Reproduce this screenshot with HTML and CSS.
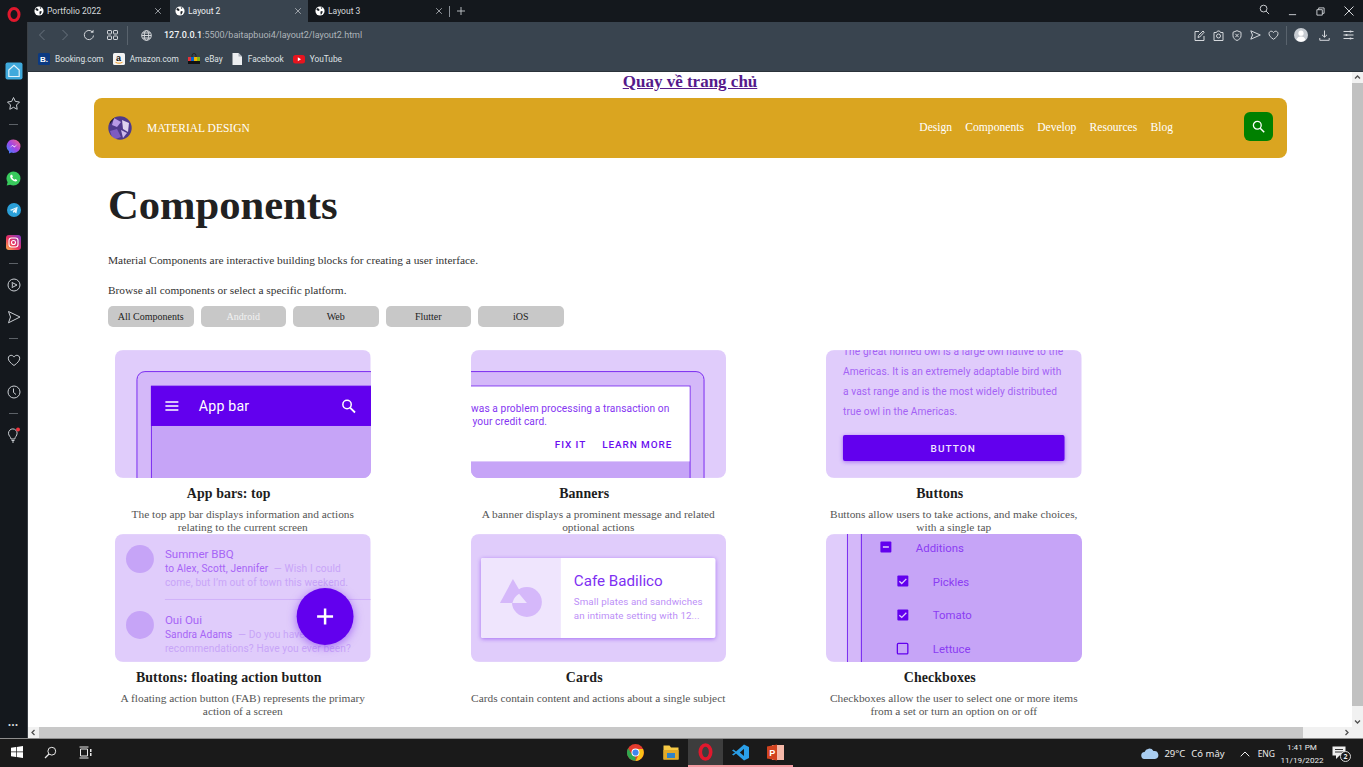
FILE: index.html
```html
<!DOCTYPE html>
<html lang="vi">
<head>
<meta charset="utf-8">
<title>Layout 2</title>
<link rel="stylesheet" href="styles.css">
</head>
<body>
<svg class="defs" width="0" height="0" aria-hidden="true">
  <symbol id="globe" viewBox="0 0 12 12"><circle cx="6" cy="6" r="5.5" fill="#fff"/><path d="M3 2.5l2 1 .5 1.500-1.500 1-1.500-1-1-1zM7 6l2.500.5L8 9.500l-1 1L6.500 8zM7 1.500l2 .5-1.500 1.500z" fill="#1b2026"/></symbol>
  <symbol id="x" viewBox="0 0 10 10"><path d="M1.500 1.500l7 7M8.500 1.500l-7 7" fill="none" stroke="currentColor" stroke-width="1"/></symbol>
  <symbol id="check" viewBox="0 0 12 12"><path d="M2.500 6.200l2.400 2.300 4.600-4.700" fill="none" stroke="#e0ccfc" stroke-width="1.300"/></symbol>
</svg>

<div class="tabbar">
  <div class="opera-slot">
    <svg width="14" height="15" viewBox="0 0 14 15"><ellipse cx="7" cy="7.500" rx="5" ry="6" fill="none" stroke="#e0182d" stroke-width="3"/></svg>
  </div>
  <div class="tab tab-one"><svg class="tab-globe"><use href="#globe"/></svg><span class="tab-title">Portfolio 2022</span><svg class="tab-x"><use href="#x"/></svg></div>
  <div class="tab tab-two active"><svg class="tab-globe"><use href="#globe"/></svg><span class="tab-title">Layout 2</span><svg class="tab-x"><use href="#x"/></svg></div>
  <div class="tab tab-three"><svg class="tab-globe"><use href="#globe"/></svg><span class="tab-title">Layout 3</span><svg class="tab-x"><use href="#x"/></svg></div>
  <div class="tab-sep"></div>
  <svg class="tab-plus" viewBox="0 0 9 9"><path d="M4.500 0v9M0 4.500h9" stroke="#c8ccd0" stroke-width="1"/></svg>
  <div class="win-controls">
    <svg class="wc-search" viewBox="0 0 12 12"><circle cx="5" cy="5" r="3.700" class="ln"/><path d="M7.700 7.700L11 11" class="ln"/></svg>
    <svg class="wc-min" viewBox="0 0 10 10"><path d="M1 8.500h8" class="ln"/></svg>
    <svg class="wc-restore" viewBox="0 0 10 10"><path d="M1 3h6v6H1zM3 3V1h6v6H7" class="ln"/></svg>
    <svg class="wc-close" viewBox="0 0 10 10"><path d="M.5.500l9 9M9.500.500l-9 9" class="ln"/></svg>
  </div>
</div>

<div class="frame">
  <aside class="sidebar">
    <div class="side-item"><svg width="18" height="18" viewBox="0 0 18 18"><rect x=".5" y=".5" width="17" height="17" rx="2" fill="#3fa9dc"/><path d="M3.800 8L9 3.200 14.200 8v6.500H3.800z" fill="none" stroke="#dff2fb" stroke-width="1.200"/></svg></div>
    <div class="side-item"><svg width="15" height="15" viewBox="0 0 15 15"><path d="M7.500 1.500l1.800 3.900 4.200.6-3 3 .7 4.300-3.700-2-3.700 2 .7-4.300-3-3 4.200-.6z" class="ln-side"/></svg></div>
    <div class="side-sep"><span></span></div>
    <div class="side-item"><svg width="15" height="15" viewBox="0 0 15 15"><defs><linearGradient id="msg" x1="0" y1="1" x2="1" y2="0"><stop offset="0" stop-color="#2d8cff"/><stop offset=".5" stop-color="#a344e6"/><stop offset="1" stop-color="#ff6a7a"/></linearGradient></defs><path d="M7.500 0.500a7 6.700 0 0 1 0 13.400c-.9 0-1.500-.1-2.200-.4L3 14.500v-2.200a6.700 6.700 0 0 1 4.500-11.800z" fill="url(#msg)"/><path d="M3.500 9l3-3 2 1.600L11.500 5l-3 3.400-2-1.600z" fill="#fff"/></svg></div>
    <div class="side-item"><svg width="15" height="15" viewBox="0 0 15 15"><path d="M7.500.5a7 7 0 0 1 0 14c-1.200 0-2.300-.3-3.300-.8L.7 14.500l.9-3.300A7 7 0 0 1 7.500.5z" fill="#38c95c"/><path d="M5 3.800l1.100-.1.800 1.900-.7.900c.5 1.100 1.300 1.800 2.300 2.300l.9-.8 1.800.9-.3 1.200c-.8.700-2 .5-3.100 0-1.700-.8-3-2.200-3.500-3.800C4 5.300 4.300 4.400 5 3.800z" fill="#fff"/></svg></div>
    <div class="side-item"><svg width="14" height="14" viewBox="0 0 14 14"><circle cx="7" cy="7" r="7" fill="#2a9fd8"/><path d="M2.800 7l7.900-3.200-1.300 6.700-2.200-1.600-1.100 1.100-.3-2L9 5.300 4.700 7.800z" fill="#e8f6fc"/></svg></div>
    <div class="side-item"><svg width="15" height="15" viewBox="0 0 15 15"><defs><linearGradient id="ig" x1="0" y1="1" x2="1" y2="0"><stop offset="0" stop-color="#fdb44b"/><stop offset=".45" stop-color="#e8305f"/><stop offset="1" stop-color="#7a3bc9"/></linearGradient></defs><rect width="15" height="15" rx="3" fill="url(#ig)"/><rect x="3" y="3" width="9" height="9" rx="2.500" fill="none" stroke="#fff" stroke-width="1.100"/><circle cx="7.500" cy="7.500" r="2" fill="none" stroke="#fff" stroke-width="1.100"/></svg></div>
    <div class="side-sep"><span></span></div>
    <div class="side-item"><svg width="14" height="14" viewBox="0 0 14 14"><circle cx="7" cy="7" r="6" class="ln-side"/><path d="M5 4.500L10 7 5 9.500C5.500 8 5.500 6 5 4.500z" class="ln-side"/></svg></div>
    <div class="side-item"><svg width="14" height="14" viewBox="0 0 14 14"><path d="M1.500 1.500L13 7 1.500 12.800 3.500 7z" class="ln-side"/></svg></div>
    <div class="side-sep"><span></span></div>
    <div class="side-item"><svg width="14" height="14" viewBox="0 0 14 14"><path d="M7 12.500C3.500 10 1.300 7.800 1.300 5.200 1.300 3.400 2.700 2.300 4.100 2.300c1.200 0 2.300.7 2.900 1.800.6-1.100 1.700-1.800 2.900-1.800 1.400 0 2.800 1.100 2.800 2.900 0 2.600-2.200 4.800-5.700 7.300z" class="ln-side"/></svg></div>
    <div class="side-item"><svg width="14" height="14" viewBox="0 0 14 14"><circle cx="7" cy="7" r="6" class="ln-side"/><path d="M6.500 3.500V7.500L9 9.500" class="ln-side"/></svg></div>
    <div class="side-sep"><span></span></div>
    <div class="side-item"><svg width="15" height="16" viewBox="0 0 15 16"><path d="M5 12c0-2-2.500-3-2.500-5.800a4.300 4.300 0 0 1 8.600 0C11.100 9 8.800 10 8.800 12z" class="ln-side"/><path d="M5.500 13.500h3M6 15h2" class="ln-side"/><circle cx="12" cy="2.500" r="2" fill="#f0323c"/></svg></div>
    <div class="side-dots">•••</div>
  </aside>

  <div class="main">
    <div class="toolbar">
      <button class="tb-btn dim"><svg width="8" height="12" viewBox="0 0 8 12"><path d="M6.500 1L1.500 6l5 5" class="ln"/></svg></button>
      <button class="tb-btn dim"><svg width="8" height="12" viewBox="0 0 8 12"><path d="M1.500 1l5 5-5 5" class="ln"/></svg></button>
      <button class="tb-btn"><svg width="12" height="12" viewBox="0 0 12 12"><path d="M10.500 6.500A4.600 4.600 0 1 1 9 2.600" class="ln"/><path d="M10.500.800v3h-3z" fill="currentColor"/></svg></button>
      <button class="tb-btn"><svg width="11" height="10" viewBox="0 0 11 10"><rect x=".5" y=".5" width="4" height="3.500" rx=".6" class="ln"/><rect x="6.500" y=".5" width="4" height="3.500" rx=".6" class="ln"/><rect x=".5" y="6" width="4" height="3.500" rx=".6" class="ln"/><rect x="6.500" y="6" width="4" height="3.500" rx=".6" class="ln"/></svg></button>
      <div class="tb-sep"></div>
      <svg class="url-globe" width="11" height="11" viewBox="0 0 11 11"><circle cx="5.500" cy="5.500" r="4.800" class="ln"/><ellipse cx="5.500" cy="5.500" rx="2.200" ry="4.800" class="ln"/><path d="M.7 5.500h9.600M1.500 3h8M1.500 8h8" class="ln"/></svg>
      <div class="url"><span class="url-host">127.0.0.1</span>:5500/baitapbuoi4/layout2/layout2.html</div>
      <div class="tb-right">
        <span class="tb-small"><svg width="11" height="11" viewBox="0 0 11 11"><path d="M5 1.500H1v9h9V6" class="ln"/><path d="M4 7.500l.5-2L9 1l1.200 1.200L5.700 7z" class="ln"/></svg></span>
        <span class="tb-small"><svg width="11" height="11" viewBox="0 0 11 11"><path d="M1 2.500h2.500l1-1.500h2l1 1.500H10v8H1z" class="ln"/><circle cx="5.500" cy="6" r="2" class="ln"/></svg></span>
        <span class="tb-small"><svg width="10" height="11" viewBox="0 0 10 11"><path d="M5 .7l4 1.600v3.500c0 2.300-1.800 3.800-4 4.700C2.800 9.600 1 8.100 1 5.800V2.300z" class="ln"/><path d="M3.300 3.800l3.400 3.400M6.700 3.800L3.300 7.200" class="ln"/></svg></span>
        <span class="tb-small"><svg width="11" height="10" viewBox="0 0 11 10"><path d="M.8.800L10.300 5 .8 9.200 2.500 5z" class="ln"/></svg></span>
        <span class="tb-small"><svg width="11" height="10" viewBox="0 0 11 10"><path d="M5.500 9.300C2.700 7.300 1 5.700 1 3.600 1 2.200 2 1.200 3.200 1.200c1 0 1.800.5 2.300 1.400C6 1.700 6.800 1.200 7.800 1.200 9 1.200 10 2.200 10 3.600c0 2.100-1.700 3.700-4.500 5.700z" class="ln"/></svg></span>
        <div class="tb-sep tb-sep-right"></div>
        <span class="tb-avatar"><svg width="14" height="14" viewBox="0 0 14 14"><circle cx="7" cy="7" r="7" fill="#c7ccd2"/><circle cx="7" cy="5.200" r="2.600" fill="#fff"/><path d="M2.500 12c.5-2.500 2.300-3.500 4.500-3.500s4 1 4.500 3.500A7 7 0 0 1 2.500 12z" fill="#fff"/></svg></span>
        <span class="tb-big"><svg width="11" height="11" viewBox="0 0 11 11"><path d="M5.500.5v6.500M3 4.800l2.500 2.400L8 4.800M.8 8v2.300h9.400V8" class="ln"/></svg></span>
        <span class="tb-big"><svg width="11" height="10" viewBox="0 0 11 10"><path d="M.5 1.500h10M.5 5h10M.5 8.500h10" class="ln"/><circle cx="7.500" cy="1.500" r="1.100" fill="#d5d8dc"/><circle cx="3.500" cy="5" r="1.100" fill="#d5d8dc"/><circle cx="7.500" cy="8.500" r="1.100" fill="#d5d8dc"/></svg></span>
      </div>
    </div>

    <div class="bookmarks">
      <div class="bm"><svg width="12" height="12" viewBox="0 0 12 12"><rect width="12" height="12" rx="1.500" fill="#0b3a82"/><text x="2" y="9.300" class="bm-b">B.</text></svg><span>Booking.com</span></div>
      <div class="bm"><svg width="12" height="12" viewBox="0 0 12 12"><rect width="12" height="12" rx="1.500" fill="#f3f3f3"/><text x="3" y="8" class="bm-a">a</text><path d="M2.500 9.300c2 1.200 5 1.200 7 0" fill="none" stroke="#f29a1f" stroke-width="1"/></svg><span>Amazon.com</span></div>
      <div class="bm"><svg width="12" height="12" viewBox="0 0 12 12"><path d="M4 4V2.500a2 2 0 0 1 4 0V4" fill="none" stroke="#222" stroke-width="1"/><rect y="4" width="3" height="4" fill="#e53238"/><rect x="3" y="4" width="3" height="4" fill="#0064d2"/><rect x="6" y="4" width="3" height="4" fill="#f5af02"/><rect x="9" y="4" width="3" height="4" fill="#86b817"/><rect y="8" width="12" height="3" fill="#111"/></svg><span>eBay</span></div>
      <div class="bm bm-doc"><svg width="10" height="12" viewBox="0 0 10 12"><path d="M.5 0h6l3.500 3.500V12H.5z" fill="#eceef0"/><path d="M6.500 0v3.500H10z" fill="#a9b0b8"/></svg><span>Facebook</span></div>
      <div class="bm"><svg width="12" height="12" viewBox="0 0 12 12"><rect y="2" width="12" height="8.500" rx="2.500" fill="#e8141e"/><path d="M4.800 4.300v4L8 6.300z" fill="#fff"/></svg><span>YouTube</span></div>
    </div>

    <div class="viewport">
      <div class="view-row">
        <div class="page">
          <h3 class="home-link"><a href="#home">Quay về trang chủ</a></h3>
          <nav class="navbar">
            <svg class="brand-logo" width="24" height="24" viewBox="0 0 24 24"><defs><clipPath id="logoc"><circle cx="12" cy="12" r="11.700"/></clipPath></defs><g clip-path="url(#logoc)"><g class="logo-art"><rect width="24" height="24" fill="#4f3a8c"/><path d="M6 2l7 4-4 5-5-2z" fill="#b79ae6"/><path d="M14 4l7 3-1 9-5-3z" fill="#ddd3ee"/><path d="M2 15l7-2 4 8-8 3z" fill="#7d5bc0"/><path d="M13 14l6 3-4 5z" fill="#cdb9ec"/><path d="M0 0h8L2 8z" fill="#1f1a30"/><path d="M17 0h7v7z" fill="#2a2238"/></g></g></svg>
            <span class="brand">MATERIAL DESIGN</span>
            <ul class="nav-links">
              <li><a href="#design">Design</a></li>
              <li><a href="#components">Components</a></li>
              <li><a href="#develop">Develop</a></li>
              <li><a href="#resources">Resources</a></li>
              <li><a href="#blog">Blog</a></li>
            </ul>
            <button class="nav-search"><svg width="13" height="13" viewBox="0 0 13 13"><circle cx="5.300" cy="5.300" r="3.900" fill="none" stroke="#fff" stroke-width="1.300"/><path d="M8.200 8.200l4 4" stroke="#fff" stroke-width="1.500"/></svg></button>
          </nav>

          <section class="intro">
            <h1>Components</h1>
            <p class="lead">Material Components are interactive building blocks for creating a user interface.</p>
            <p class="lead lead-two">Browse all components or select a specific platform.</p>
            <div class="pills">
              <button class="pill pill-main">All Components</button>
              <button class="pill pill-muted">Android</button>
              <button class="pill">Web</button>
              <button class="pill">Flutter</button>
              <button class="pill">iOS</button>
            </div>
          </section>

          <section class="grid">
            <article class="card">
              <svg class="thumb" viewBox="0 0 256 128">
                <rect width="256" height="128" class="c1"/>
                <rect x="22" y="21.500" width="260" height="140" rx="8" class="c2 edge"/>
                <rect x="36.500" y="36" width="240" height="120" class="c3 edge"/>
                <rect x="36" y="36" width="240" height="40" class="prim"/>
                <path d="M50.500 52h13M50.500 56h13M50.500 60h13" stroke="#fff" stroke-width="1.300"/>
                <text x="84" y="61" class="t-appbar">App bar</text>
                <circle cx="232.500" cy="54.500" r="4.200" fill="none" stroke="#fff" stroke-width="1.500"/>
                <path d="M235.500 57.500l5 5" stroke="#fff" stroke-width="1.800"/>
              </svg>
              <h2 class="card-title">App bars: top</h2>
              <p class="card-text">The top app bar displays information and actions relating to the current screen</p>
            </article>

            <article class="card">
              <svg class="thumb" viewBox="0 0 256 128">
                <rect width="256" height="128" class="c1"/>
                <rect x="-40" y="21.500" width="273.500" height="140" rx="8" class="c2 edge"/>
                <rect x="-40" y="36" width="259.500" height="100" class="c3 edge"/>
                <rect x="-40" y="36.500" width="259" height="75" fill="#fff"/>
                <text x="0" y="61.500" class="t-banner">was a problem processing a transaction on</text>
                <text x="1.500" y="75.500" class="t-banner">your credit card.</text>
                <text x="84" y="98.500" class="t-action">FIX IT</text>
                <text x="131.500" y="98.500" class="t-action">LEARN MORE</text>
              </svg>
              <h2 class="card-title">Banners</h2>
              <p class="card-text">A banner displays a prominent message and related optional actions</p>
            </article>

            <article class="card">
              <svg class="thumb" viewBox="0 0 256 128">
                <rect width="256" height="128" class="c1"/>
                <text x="17" y="5" class="t-owl">The great horned owl is a large owl native to the</text>
                <text x="17" y="25" class="t-owl">Americas. It is an extremely adaptable bird with</text>
                <text x="17" y="45" class="t-owl">a vast range and is the most widely distributed</text>
                <text x="17" y="65" class="t-owl">true owl in the Americas.</text>
                <rect x="17" y="85" width="222" height="26" rx="2" class="prim glow"/>
                <text x="127.500" y="102" class="t-btn">BUTTON</text>
              </svg>
              <h2 class="card-title">Buttons</h2>
              <p class="card-text">Buttons allow users to take actions, and make choices, with a single tap</p>
            </article>

            <article class="card">
              <svg class="thumb" viewBox="0 0 256 128">
                <rect width="256" height="128" class="c1"/>
                <circle cx="25" cy="25" r="14" class="c3"/>
                <circle cx="25" cy="91" r="14" class="c3"/>
                <text x="50" y="24" class="t-mail-h">Summer BBQ</text>
                <text x="50" y="38" class="t-mail"><tspan class="t-mail-strong">to Alex, Scott, Jennifer</tspan> <tspan dx="3">— Wish I could</tspan></text>
                <text x="50" y="52" class="t-mail">come, but I’m out of town this weekend.</text>
                <path d="M50 65.500h206" class="divider"/>
                <text x="50" y="90" class="t-mail-h">Oui Oui</text>
                <text x="50" y="104" class="t-mail"><tspan class="t-mail-strong">Sandra Adams</tspan> <tspan dx="3">— Do you have</tspan></text>
                <text x="50" y="118" class="t-mail">recommendations? Have you ever been?</text>
                <circle cx="210.500" cy="82.500" r="28.500" class="prim glow-fab"/>
                <path d="M202.500 82.500h16M210.500 74.500v16" stroke="#fff" stroke-width="2.500"/>
              </svg>
              <h2 class="card-title">Buttons: floating action button</h2>
              <p class="card-text">A floating action button (FAB) represents the primary action of a screen</p>
            </article>

            <article class="card">
              <svg class="thumb" viewBox="0 0 256 128">
                <rect width="256" height="128" class="c1"/>
                <rect x="10" y="24" width="235" height="80" rx="2" fill="#fff" class="glow"/>
                <path d="M10 26a2 2 0 0 1 2-2h78v80H12a2 2 0 0 1-2-2z" fill="#efe5fd"/>
                <circle cx="56" cy="68" r="15" fill="#d5b8fa"/>
                <path d="M42 45l-13 24h27z" fill="#d5b8fa"/>
                <path d="M41.500 69a15 15 0 0 1 6.700-9.200L56 69z" fill="#efe5fd"/>
                <text x="103" y="52" class="t-cafe">Cafe Badilico</text>
                <text x="103" y="71" class="t-cafe-s">Small plates and sandwiches</text>
                <text x="103" y="85" class="t-cafe-s">an intimate setting with 12...</text>
              </svg>
              <h2 class="card-title">Cards</h2>
              <p class="card-text">Cards contain content and actions about a single subject</p>
            </article>

            <article class="card">
              <svg class="thumb" viewBox="0 0 256 128">
                <rect width="256" height="128" class="c1"/>
                <rect x="21.500" y="-5" width="14" height="140" class="c2 edge"/>
                <rect x="35.500" y="-5" width="230" height="140" class="c3 edge"/>
                <rect x="54.500" y="7.500" width="11" height="11" rx="1" class="prim"/>
                <path d="M57 13h6" stroke="#e0ccfc" stroke-width="1.500"/>
                <text x="90" y="17.500" class="t-check">Additions</text>
                <rect x="71.500" y="41.500" width="11" height="11" rx="1" class="prim"/>
                <use href="#check" x="71" y="41" width="12" height="12"/>
                <text x="107" y="51.500" class="t-check">Pickles</text>
                <rect x="71.500" y="75.500" width="11" height="11" rx="1" class="prim"/>
                <use href="#check" x="71" y="75" width="12" height="12"/>
                <text x="107" y="85.500" class="t-check">Tomato</text>
                <rect x="71.500" y="109.500" width="10.500" height="10.500" rx="1" fill="none" stroke="#6200ee" stroke-width="1.300"/>
                <text x="107" y="119.500" class="t-check">Lettuce</text>
              </svg>
              <h2 class="card-title">Checkboxes</h2>
              <p class="card-text">Checkboxes allow the user to select one or more items from a set or turn an option on or off</p>
            </article>
          </section>
        </div>
        <div class="vscroll">
          <svg class="arrow" viewBox="0 0 11 11"><path d="M3 6.500l2.500-2.500L8 6.500" class="sb-a"/></svg>
          <div class="vthumb"></div>
          <svg class="arrow arrow-end" viewBox="0 0 11 11"><path d="M3 4.500L5.500 7 8 4.500" class="sb-a"/></svg>
        </div>
      </div>
      <div class="hscroll">
        <svg class="arrow" viewBox="0 0 11 11"><path d="M6.500 3L4 5.500 6.500 8" class="sb-a"/></svg>
        <div class="hthumb"></div>
        <svg class="arrow arrow-right" viewBox="0 0 11 11"><path d="M4.500 3L7 5.500 4.500 8" class="sb-a"/></svg>
        <div class="corner"></div>
      </div>
    </div>
  </div>
</div>

<footer class="taskbar">
  <span class="task task-win"><svg width="12" height="12" viewBox="0 0 12 12"><path d="M0 1.700l5-.7v4.600H0zM5.700.9L12 0v5.600H5.700zM0 6.300h5v4.700l-5-.7zM5.700 6.300H12V12l-6.300-.9z" fill="#fff"/></svg></span>
  <span class="task"><svg width="13" height="13" viewBox="0 0 13 13"><circle cx="7.800" cy="5.200" r="3.900" fill="none" stroke="#e8e8e8" stroke-width="1"/><path d="M5 8L1 12" stroke="#e8e8e8" stroke-width="1.200"/></svg></span>
  <span class="task"><svg width="13" height="13" viewBox="0 0 13 13"><path d="M1.500 3h7v7h-7zM.5 1h9M.5 12h9" fill="none" stroke="#e8e8e8" stroke-width="1"/><path d="M11 3h1.500v3H11zM11 7h1.500v3H11z" fill="#e8e8e8"/></svg></span>
  <span class="task task-first"><svg width="17" height="17" viewBox="0 0 17 17"><circle cx="8.500" cy="8.500" r="8.500" fill="#e33b2e"/><path d="M8.500 17a8.500 8.500 0 0 1-7.400-12.700L5 10.500l3.500 2.500z" fill="#2fa84f"/><path d="M8.500 5H16a8.500 8.500 0 0 1-7.500 12L12 10z" fill="#fbc116"/><circle cx="8.500" cy="8.500" r="4" fill="#fff"/><circle cx="8.500" cy="8.500" r="3.100" fill="#3f86ee"/></svg></span>
  <span class="task"><svg width="16" height="16" viewBox="0 0 16 16"><path d="M.5 1.500h6l1.500 2h7.500v12H.5z" fill="#f6c944"/><rect x=".5" y="6" width="15" height="9.500" fill="#e2a928"/><rect x="4" y="9" width="8" height="5" fill="#2f82c9"/></svg></span>
  <span class="task task-on task-active"><svg width="15" height="18" viewBox="0 0 15 18"><ellipse cx="7.500" cy="9" rx="5.200" ry="7" fill="none" stroke="#e0182d" stroke-width="3.600"/></svg></span>
  <span class="task task-on"><svg width="17" height="17" viewBox="0 0 17 17"><path d="M12 .5L17 3v11l-5 2.500L4 9.500l-2.500 2L0 10.500 3 8.500 0 6.500 1.500 5.500 4 7.500z" fill="#2a9fe8"/><path d="M12 4.800L7.800 8.500 12 12z" fill="#1a1a1a"/></svg></span>
  <span class="task task-on"><svg width="17" height="17" viewBox="0 0 17 17"><rect x="5" y="1" width="12" height="15" fill="#f5b8a8"/><path d="M0 2.500L10 .5v16L0 14.500z" fill="#d2431f"/><text x="2.300" y="12" class="t-ppt">P</text></svg></span>
  <div class="tray">
    <svg class="tray-cloud" width="18" height="11" viewBox="0 0 18 11"><path d="M4 11a3.500 3.500 0 0 1-.5-7A5 5 0 0 1 12.500 3 4 4 0 0 1 14 11z" fill="#a9cdf0"/></svg>
    <span class="tray-temp">29°C</span>
    <span class="tray-weather">Có mây</span>
    <svg class="tray-up" width="10" height="6" viewBox="0 0 10 6"><path d="M.7 5.300L5 1l4.300 4.300" fill="none" stroke="#eee" stroke-width="1"/></svg>
    <span class="tray-lang">ENG</span>
    <div class="tray-clock"><span>1:41 PM</span><span>11/19/2022</span></div>
    <span class="tray-note"><svg width="16" height="15" viewBox="0 0 16 15"><path d="M.5.500h13v9h-6L4 13V9.500H.5z" fill="#eee"/><path d="M3 3.500h8M3 6h8" stroke="#333" stroke-width="1"/></svg><b class="note-badge">2</b></span>
  </div>
</footer>
</body>
</html>
```

FILE: styles.css
```css
* { box-sizing: border-box; }
html, body { margin: 0; height: 100%; overflow: hidden; }
body {
  width: 1363px; height: 767px; display: flex; flex-direction: column;
  background: #14181d; font-family: "Liberation Serif", serif; color: #222;
}
.defs { position: absolute; }
svg { flex: none; display: block; }
.ln { fill: none; stroke: currentColor; stroke-width: 1; }
.ln-side { fill: none; stroke: #c9cdd2; stroke-width: 1; stroke-linejoin: round; }

/* Browser tab strip */
.tabbar {
  height: 22px; display: flex; align-items: center; flex: none;
  background: #14181d; font-family: Roboto, sans-serif; color: #d5d8dc;
}
.opera-slot { width: 28px; display: flex; justify-content: center; padding-top: 6px; }
.tab { height: 22px; display: flex; align-items: center; padding-left: 5px; font-size: 8.500px; }
.tab-one { width: 142px; padding-left: 6px; }
.tab-two { width: 138px; }
.tab-three { width: 141px; padding-left: 7px; }
.tab.active { background: #39444f; color: #eef0f2; }
.tab-globe { width: 10px; height: 10px; margin-right: 3px; }
.tab-title { flex: 1; }
.tab-x { width: 8px; height: 8px; margin-right: 6px; color: #b9bdc2; }
.tab-one .tab-x { margin-right: 8px; }
.tab-sep { width: 1px; height: 11px; background: #888e95; }
.tab-plus { width: 8px; height: 8px; margin-left: 7px; }
.win-controls { margin-left: auto; display: flex; align-items: center; color: #d5d8dc; }
.wc-search { width: 11px; height: 11px; margin-right: 18px; margin-top: -3px; }
.wc-min { width: 9px; height: 9px; margin-right: 19px; }
.wc-restore { width: 9px; height: 9px; margin-right: 19px; }
.wc-close { width: 10px; height: 10px; margin-right: 9px; }

/* Frame */
.frame { flex: 1; min-height: 0; display: flex; }
.sidebar {
  width: 28px; flex: none; display: flex; flex-direction: column; align-items: center;
  padding-top: 33px; background: #14181d; border-right: 1px solid #3a3f45;
}
.side-item { height: 32px; flex: none; display: flex; align-items: center; justify-content: center; }
.side-sep { height: 11px; flex: none; display: flex; align-items: center; }
.side-sep span { display: block; width: 9px; height: 1px; background: #5c6167; }
.side-dots { margin-top: auto; height: 27px; font: 7px/27px "Liberation Sans", sans-serif; color: #dfe1e3; letter-spacing: 1px; }

.main { flex: 1; min-width: 0; display: flex; flex-direction: column; }
.toolbar {
  height: 26px; flex: none; display: flex; align-items: center; padding-left: 2px; padding-right: 3px;
  background: #39444f; color: #d5d8dc; font-family: Roboto, sans-serif;
}
.tb-btn {
  width: 23.500px; height: 20px; padding: 0; border: 0; background: none; color: inherit;
  display: flex; align-items: center; justify-content: center;
}
.tb-btn.dim { color: #69737e; }
.tb-sep { width: 1px; height: 19px; background: #59636d; margin: 0 13px 0 3px; }
.url-globe { margin-right: 12px; }
.url { font-size: 9px; color: #aeb4ba; }
.url-host { color: #f2f3f4; font-weight: 500; }
.tb-right { margin-left: auto; display: flex; align-items: center; }
.tb-small { width: 18.500px; display: flex; justify-content: center; }
.tb-sep-right { margin: 0 3px 0 3px; }
.tb-avatar { width: 22px; display: flex; justify-content: center; }
.tb-big { width: 24px; display: flex; justify-content: center; }

.bookmarks {
  height: 24px; flex: none; display: flex; align-items: center; gap: 9px; padding: 0 0 2px 10px;
  background: #39444f; border-bottom: 1px solid #2a323a;
  font: 8.300px Roboto, sans-serif; color: #dfe2e5;
}
.bm { display: flex; align-items: center; gap: 5px; }
.bm-doc { gap: 6px; }
.bm-b { font: bold 8px "Liberation Sans", sans-serif; fill: #fff; }
.bm-a { font: bold 9px "Liberation Sans", sans-serif; fill: #111; }

/* Viewport */
.viewport { flex: 1; min-height: 0; display: flex; flex-direction: column; background: #fff; }
.view-row { flex: 1; min-height: 0; display: flex; }
.page { flex: 1; min-width: 0; overflow: hidden; }
.home-link { margin: 0; height: 26px; text-align: center; font-size: 17px; line-height: 20px; }
.home-link a { color: #551a8b; }

.navbar {
  width: 1193px; height: 60px; margin-left: 66px; display: flex; align-items: center;
  padding: 0 14px 1px; background: #daa520; border-radius: 8px;
}
.brand-logo { margin-right: 15px; }
.logo-art { filter: blur(.6px); }
.brand { color: #fff; font-size: 11.500px; }
.nav-links {
  list-style: none; display: flex; gap: 13.200px; margin: 0 71px 0 auto; padding: 0; font-size: 11.600px;
}
.nav-links a { color: #fff; text-decoration: none; }
.nav-search {
  width: 29px; height: 29px; padding: 0; border: 0; border-radius: 6px; background: #008000;
  display: flex; align-items: center; justify-content: center; margin-top: -3px;
}

.intro { padding-left: 80px; }
h1 { margin: 22px 0 0; font-size: 42.600px; line-height: 49px; color: #212121; }
.lead { margin: 25px 0 0; font-size: 11.360px; line-height: 13px; color: #333; }
.lead-two { margin-top: 17px; }
.pills { display: flex; gap: 7px; margin-top: 9px; }
.pill {
  width: 85.500px; height: 21px; padding: 0; border: 0; border-radius: 5px; background: #c8c8c8;
  font: 10px "Liberation Serif", serif; color: #222;
}
.pill-muted { color: #f2f2f2; }

.grid {
  display: grid; grid-template-columns: repeat(3, 255.500px); column-gap: 100px;
  grid-auto-rows: 184px; margin: 23px 0 0 87px;
}
.thumb { width: 255.500px; height: 128px; border-radius: 8px; }
.card-title { margin: 8px 0 0; padding-right: 28px; text-align: center; font-size: 13.900px; line-height: 15px; color: #1d1d1d; letter-spacing: .1px; }
.card-text { margin: 7px 0 0; text-align: center; font-size: 11.360px; line-height: 13px; color: #555; }

/* Illustration colours */
.c1 { fill: #e0ccfb; }
.c2 { fill: #d4b8f9; }
.c3 { fill: #c6a4f7; }
.prim { fill: #6200ee; }
.edge { stroke: #7a2cf0; stroke-width: 1; }
.glow { filter: drop-shadow(0 1px 2px rgba(98, 0, 238, .45)); }
.glow-fab { filter: drop-shadow(0 2px 5px rgba(98, 0, 238, .5)); }
.divider { stroke: #d0b3f9; stroke-width: 1; }
.thumb text { font-family: Roboto, sans-serif; }
.t-appbar { font-size: 14.200px; font-weight: 400; fill: #fff; letter-spacing: .2px; }
.t-banner { font-size: 10.200px; font-weight: 400; fill: #8535f2; letter-spacing: .1px; }
.t-action { font-size: 10px; font-weight: 500; fill: #6a0ef0; letter-spacing: .9px; }
.t-owl { font-size: 10.200px; fill: #a463f5; letter-spacing: .1px; }
.t-btn { font-size: 10px; font-weight: 500; fill: #f0e6ff; letter-spacing: 1.100px; text-anchor: middle; }
.t-mail-h { font-size: 11.600px; fill: #a765f6; }
.t-mail { font-size: 10.200px; fill: #c8a5f8; letter-spacing: .1px; }
.t-mail-strong { fill: #a765f6; }
.t-cafe { font-size: 15.200px; fill: #7e2ff2; }
.t-cafe-s { font-size: 9.800px; fill: #bd90f7; letter-spacing: .1px; }
.t-check { font-size: 11.400px; fill: #8b3cf3; }
.t-ppt { font: bold 9px "Liberation Sans", sans-serif; fill: #fff; }

/* Scrollbars */
.vscroll { width: 11px; flex: none; display: flex; flex-direction: column; background: #f1f1f1; }
.arrow { width: 11px; height: 11px; flex: none; }
.arrow-end { margin-top: auto; }
.sb-a { fill: none; stroke: #505050; stroke-width: 1.300; }
.vthumb { width: 11px; height: 623px; background: #c1c1c1; }
.hscroll { height: 11px; flex: none; display: flex; background: #f1f1f1; }
.hthumb { width: 1264px; height: 11px; background: #c8c8c8; }
.arrow-right { margin-left: auto; }
.corner { width: 11px; flex: none; background: #f1f1f1; }

/* Windows taskbar */
.taskbar {
  height: 29px; flex: none; display: flex; align-items: stretch; background: #1a1a1a;
  border-top: 1px solid #8e8e8e; font: 9.500px "Noto Sans", sans-serif; color: #ececec;
}
.task { width: 35px; display: flex; align-items: center; justify-content: center; flex: none; border-bottom: 2px solid transparent; }
.task-win { width: 33px; }
.task-first { margin-left: 515px; }
.task-on { border-bottom-color: #f39aa0; }
.task-active { background: #3d3d3d; }
.tray { margin-left: auto; display: flex; align-items: center; padding-top: 1px; }
.tray-cloud { margin-right: 5px; }
.tray-temp { margin-right: 6px; }
.tray-weather { margin-right: 15px; }
.tray-up { margin-right: 8px; }
.tray-lang { margin-right: 3px; font-size: 8.500px; }
.tray-clock { width: 48px; display: flex; flex-direction: column; align-items: center; font: 8.100px/13px Roboto, sans-serif; margin-right: 6px; }
.tray-note { width: 24px; margin-right: 7px; position: relative; display: flex; }
.note-badge {
  position: absolute; left: 8px; top: 5px; width: 11px; height: 11px; border-radius: 50%;
  background: #1a1a1a; border: 1px solid #d8d8d8; font: bold 7px/9px "Noto Sans", sans-serif; text-align: center; color: #eee;
}
```
